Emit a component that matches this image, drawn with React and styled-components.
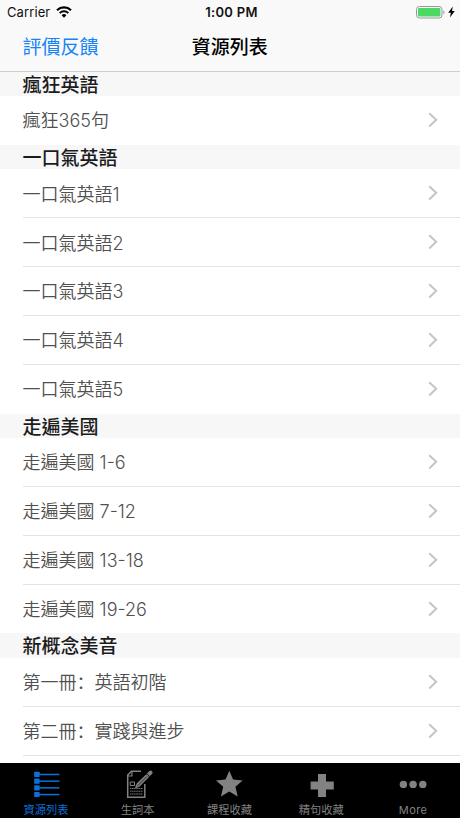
import React from "react";
import styled, { createGlobalStyle } from "styled-components";

const GlobalStyle = createGlobalStyle`
  * { box-sizing: border-box; }
  html, body { margin: 0; padding: 0; background: #fff; }
  body {
    width: 460px;
    height: 818px;
    overflow: hidden;
    font-family: Inter, "Noto Sans CJK TC", sans-serif;
  }
`;

const Screen = styled.div`
  display: flex;
  flex-direction: column;
  width: 460px;
  height: 818px;
  overflow: hidden;
  background: #fff;
`;

const Header = styled.header`
  flex: none;
  height: 71.5px;
  background: #f9f9f9;
  border-bottom: 1px solid #cfcfcf;
`;

const StatusBar = styled.div`
  display: grid;
  grid-template-columns: 1fr auto 1fr;
  align-items: center;
  height: 24px;
  padding: 0 5px 0 7px;
  color: #111;
  font-size: 13px;
  line-height: 24px;
`;

const Carrier = styled.div`
  display: flex;
  align-items: center;
  gap: 6px;
  letter-spacing: 0.1px;
`;

const Clock = styled.div`
  font-weight: 600;
  letter-spacing: 0.3px;
  padding-left: 1px;
`;

const Power = styled.div`
  display: flex;
  justify-content: flex-end;
  align-items: center;
  gap: 3px;
`;

const NavBar = styled.nav`
  display: grid;
  grid-template-columns: 1fr auto 1fr;
  align-items: center;
  height: 46px;
  padding: 0 23px 0 22.5px;
  font-size: 19px;
  line-height: 48px;
`;

const NavAction = styled.a`
  color: #1683f8;
`;

const NavTitle = styled.h1`
  margin: 0;
  font-size: 19px;
  font-weight: 500;
  color: #000;
`;

const List = styled.main`
  flex: 1;
  min-height: 0;
  overflow: hidden;
`;

const SectionTitle = styled.h2`
  height: 24.5px;
  margin: 0;
  padding-left: 22.5px;
  background: #f7f7f7;
  color: #1c1c1c;
  font-size: 19px;
  font-weight: 500;
  line-height: 27px;
`;

const Row = styled.div`
  display: flex;
  align-items: center;
  justify-content: space-between;
  height: 48.85px;
  margin-left: 22.5px;
  padding-right: 22px;
  border-bottom: 1px solid ${(p) => (p.$last ? "transparent" : "#e4e4e4")};
  color: #505050;
  font-size: 18px;
  font-weight: 350;
`;

const Label = styled.span`
  padding-bottom: 1px;
`;

const Colon = styled.span`
  font-family: "Noto Sans CJK SC", sans-serif;
`;

const TabBar = styled.footer`
  flex: none;
  display: grid;
  grid-template-columns: repeat(5, 91.8px);
  height: 55px;
  background: #000;
`;

const Tab = styled.div`
  display: flex;
  flex-direction: column;
  align-items: center;
  padding-top: 5px;
  color: ${(p) => (p.$active ? "#0a70dc" : "#828282")};
  font-size: ${(p) => (p.$latin ? "11px" : "11.25px")};
  letter-spacing: ${(p) => (p.$latin ? "0.4px" : "0")};
  line-height: 17px;
`;

const TabIcon = styled.svg`
  display: block;
  width: 32px;
  height: 32px;
  margin-bottom: 2px;
`;

const SECTIONS = [
  { title: "瘋狂英語", rows: ["瘋狂365句"] },
  { title: "一口氣英語", rows: ["一口氣英語1", "一口氣英語2", "一口氣英語3", "一口氣英語4", "一口氣英語5"] },
  { title: "走遍美國", rows: ["走遍美國 1-6", "走遍美國 7-12", "走遍美國 13-18", "走遍美國 19-26"] },
  { title: "新概念美音", rows: ["第一冊：英語初階", "第二冊：實踐與進步", ""], open: true },
];

function Wifi() {
  return (
    <svg width="16" height="12" viewBox="0 0 16 12" fill="none" stroke="#000">
      <path d="M1 4.2a10.2 10.2 0 0 1 14 0" strokeWidth="2.2" />
      <path d="M3.7 7.1a6.2 6.2 0 0 1 8.6 0" strokeWidth="2" />
      <path d="M8 11.8 5.6 9.3a3.4 3.4 0 0 1 4.8 0Z" fill="#000" stroke="none" />
    </svg>
  );
}

function Battery() {
  return (
    <svg width="29" height="13" viewBox="0 0 29 13">
      <rect x="0.5" y="0.5" width="25.5" height="11.5" rx="3" fill="#f9f9f9" stroke="#949b95" />
      <rect x="2" y="2" width="22.4" height="8.4" rx="1.2" fill="#4bd964" />
      <path d="M27.4 4.2c1.4.6 1.4 3.6 0 4.2Z" fill="#949b95" />
    </svg>
  );
}

function Bolt() {
  return (
    <svg width="7" height="12" viewBox="0 0 7 12">
      <path d="M4.8.5.2 6.8h2.7L1.9 11.5 6.8 5H4Z" fill="#000" />
    </svg>
  );
}

function Chevron() {
  return (
    <svg width="10" height="16" viewBox="0 0 10 16" fill="none" stroke="#c5c5c9" strokeWidth="2">
      <path d="m1.2 1.2 7 6.6-7 6.6" />
    </svg>
  );
}

function ListIcon() {
  return (
    <TabIcon viewBox="0 0 32 32" fill="#0a70dc">
      {[3.8, 10.5, 17.2, 23.9].map((y) => (
        <g key={y}>
          <rect x="4.2" y={y} width="5.4" height="5.2" rx="0.5" />
          <rect x="9" y={y + 1.9} width="20.4" height="1.5" />
        </g>
      ))}
    </TabIcon>
  );
}

function NoteIcon() {
  return (
    <TabIcon viewBox="0 0 32 32" fill="none" stroke="#828282">
      <path d="M19 3.2H9.5L5.7 7v22.2h17.1V16" strokeWidth="1.5" />
      <path d="M9.9 3v5H5.5" strokeWidth="1.2" />
      <path d="M8.2 14h4.3v3.5H8.2Z" strokeWidth="1" />
      <path d="M8 20.5h13M8 23.2h13M8 26h13" strokeWidth="0.9" strokeDasharray="1.4 0.4" />
      <path d="m15.7 17.5 9.7-9.7" strokeWidth="4" />
      <path d="m26.5 6.7 2.1-2.1" strokeWidth="4" strokeLinecap="round" />
      <path d="m14.3 16.1-1.4 4.2 4.2-1.4Z" fill="#828282" stroke="none" />
      <path d="m15.9 17.5 9-9" stroke="#000" strokeWidth="0.7" />
      <path d="m24.9 5.7 2.6 2.6" stroke="#000" strokeWidth="0.9" />
    </TabIcon>
  );
}

function StarIcon() {
  return (
    <TabIcon viewBox="0 0 32 32">
      <path
        d="m16.3 2.8 3.8 8.7 9.5.9-7.2 6.3 2.3 9.8-8.4-5.1-8.4 5.1 2.3-9.8-7.2-6.3 9.5-.9Z"
        fill="#828282"
      />
    </TabIcon>
  );
}

function PlusIcon() {
  return (
    <TabIcon viewBox="0 0 32 32">
      <path d="M13 6h8v7.6h7.8v8H21V29h-8v-7.4H5.6v-8H13Z" fill="#828282" />
    </TabIcon>
  );
}

function MoreIcon() {
  return (
    <TabIcon viewBox="0 0 32 32" fill="#828282">
      <circle cx="6.4" cy="16.4" r="3.7" />
      <circle cx="16.1" cy="16.4" r="3.7" />
      <circle cx="25.8" cy="16.4" r="3.7" />
    </TabIcon>
  );
}

const TABS = [
  { label: "資源列表", Icon: ListIcon, active: true },
  { label: "生詞本", Icon: NoteIcon },
  { label: "課程收藏", Icon: StarIcon },
  { label: "精句收藏", Icon: PlusIcon },
  { label: "More", Icon: MoreIcon, latin: true },
];

function RowLabel({ text }) {
  const [head, tail] = text.split("：");
  return (
    <Label>
      {head}
      {tail && <Colon lang="zh-Hans">：</Colon>}
      {tail}
    </Label>
  );
}

export default function App() {
  return (
    <Screen lang="zh-Hant">
      <GlobalStyle />
      <Header>
        <StatusBar>
          <Carrier>
            Carrier
            <Wifi />
          </Carrier>
          <Clock>1:00 PM</Clock>
          <Power>
            <Battery />
            <Bolt />
          </Power>
        </StatusBar>
        <NavBar>
          <NavAction>評價反饋</NavAction>
          <NavTitle>資源列表</NavTitle>
        </NavBar>
      </Header>
      <List>
        {SECTIONS.map((section) => (
          <section key={section.title}>
            <SectionTitle>{section.title}</SectionTitle>
            {section.rows.map((text, i) => (
              <Row key={i} $last={!section.open && i === section.rows.length - 1}>
                <RowLabel text={text} />
                <Chevron />
              </Row>
            ))}
          </section>
        ))}
      </List>
      <TabBar>
        {TABS.map(({ label, Icon, active, latin }) => (
          <Tab key={label} $active={active} $latin={latin}>
            <Icon />
            {label}
          </Tab>
        ))}
      </TabBar>
    </Screen>
  );
}
